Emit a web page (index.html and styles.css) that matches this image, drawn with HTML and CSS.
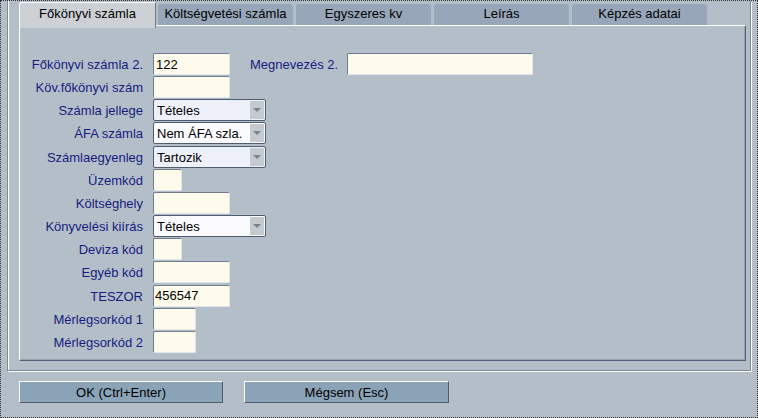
FILE: index.html
```html
<!DOCTYPE html>
<html lang="hu">
<head>
    <meta charset="UTF-8">
    <title>Főkönyvi számla</title>
    <link rel="stylesheet" href="styles.css">
</head>
<body>
    <div class="window">
        <!-- keretes csoport: fülek + panel -->
        <div class="group">
            <div class="tabs">
                <div class="tab active">Főkönyvi számla</div>
                <div class="tab">Költségvetési számla</div>
                <div class="tab">Egyszeres kv</div>
                <div class="tab">Leírás</div>
                <div class="tab">Képzés adatai</div>
            </div>
            <div class="panel">
                <div class="form">
                    <label>Főkönyvi számla 2.</label>
                    <div class="cell">
                        <input class="field w77" type="text" value="122">
                        <span class="side-label">Megnevezés 2.</span>
                        <input class="field w186" type="text" value="">
                    </div>

                    <label>Köv.főkönyvi szám</label>
                    <div class="cell"><input class="field w77" type="text" value=""></div>

                    <label>Számla jellege</label>
                    <div class="cell"><div class="select"><span class="val">Tételes</span><span class="arrow"></span></div></div>

                    <label>ÁFA számla</label>
                    <div class="cell"><div class="select white"><span class="val">Nem ÁFA szla.</span><span class="arrow"></span></div></div>

                    <label>Számlaegyenleg</label>
                    <div class="cell"><div class="select"><span class="val">Tartozik</span><span class="arrow"></span></div></div>

                    <label>Üzemkód</label>
                    <div class="cell"><input class="field w29" type="text" value=""></div>

                    <label>Költséghely</label>
                    <div class="cell"><input class="field w77" type="text" value=""></div>

                    <label>Könyvelési kiírás</label>
                    <div class="cell"><div class="select white"><span class="val">Tételes</span><span class="arrow"></span></div></div>

                    <label>Deviza kód</label>
                    <div class="cell"><input class="field w29" type="text" value=""></div>

                    <label>Egyéb kód</label>
                    <div class="cell"><input class="field w77" type="text" value=""></div>

                    <label>TESZOR</label>
                    <div class="cell"><input class="field w77 tight" type="text" value="456547"></div>

                    <label>Mérlegsorkód 1</label>
                    <div class="cell"><input class="field w43" type="text" value=""></div>

                    <label>Mérlegsorkód 2</label>
                    <div class="cell"><input class="field w43" type="text" value=""></div>
                </div>
            </div>
        </div>

        <div class="buttons">
            <button class="btn">OK (Ctrl+Enter)</button>
            <button class="btn wide">Mégsem (Esc)</button>
        </div>
    </div>
</body>
</html>
```

FILE: styles.css
```css
/* ablak alap */
body {
    margin: 0;
}
.window {
    width: 758px;
    height: 418px;
    box-sizing: border-box;
    border: 1px dotted #2e2e2e;
    background-color: #b4bec8;
    font-family: "Liberation Sans", Arial, sans-serif;
    font-size: 13px;
    color: #000;
}

/* bemélyített keret (szürke + fehér vonal) */
.group {
    margin-left: 6px;
    width: 744px;
    height: 370px;
    box-sizing: border-box;
    border: 1px solid #7e8894;
    border-top: none;
    box-shadow: 1px 1px 0 #fff, inset 1px 0 0 #fff;
    padding: 1px 0 0 11px;
}

/* fülek */
.tabs {
    display: flex;
    align-items: flex-end;
    height: 23px;
    position: relative;
    z-index: 1;
}
.tab {
    width: 135px;
    height: 21px;
    margin-right: 3px;
    box-sizing: border-box;
    background-color: #97a6b9;
    border-radius: 3px 3px 0 0;
    text-align: center;
    line-height: 20px;
    white-space: nowrap;
}
.tab.active {
    width: 137px;
    height: 26px;
    margin-right: 2px;
    margin-bottom: -3px;
    background-color: #cdd1d5;
    border-left: 1px solid #fff;
    border-top: 1px solid #fff;
    border-right: 1px solid #6c7a8a;
    border-radius: 3px 2px 0 0;
    line-height: 21px;
    align-self: flex-start;
}

/* panel a fülek alatt */
.panel {
    width: 727px;
    height: 336px;
    box-sizing: border-box;
    border: 1px solid;
    border-color: #fff #56627a #56627a #fff;
    box-shadow: inset -1px -1px 0 #98a2ae;
    padding-top: 27px;
}

.form {
    display: grid;
    grid-template-columns: 123px 1fr;
    grid-auto-rows: 22px;
    column-gap: 10px;
    row-gap: 1.17px;
}
.form label {
    text-align: right;
    line-height: 23px;
    color: #141c80;
    white-space: nowrap;
}
.cell {
    display: flex;
    align-items: center;
}
.side-label {
    width: 97px;
    margin-left: 20px;
    color: #141c80;
    white-space: nowrap;
}

/* beviteli mezők */
.field {
    height: 22px;
    box-sizing: border-box;
    margin: 0;
    padding: 0 2px;
    border: 1px solid;
    border-color: #6e7c8e #e2e5e9 #e2e5e9 #6e7c8e;
    border-radius: 2px;
    background-color: #fffbec;
    font-family: "Liberation Sans", Arial, sans-serif;
    font-size: 13px;
    color: #000;
    outline: none;
}
.field.tight {
    padding: 0 1px;
}
.w29 { width: 29px; }
.w43 { width: 43px; }
.w77 { width: 77px; }
.w186 { width: 186px; }

/* legördülő */
.select {
    width: 113px;
    height: 22px;
    box-sizing: border-box;
    border: 1px solid #4e5c72;
    border-radius: 2px;
    background-color: #eef1fa;
    display: flex;
}
.select.white {
    background-color: #fbfbfd;
}
.select .val {
    flex: 1;
    padding-left: 3px;
    line-height: 21px;
    white-space: nowrap;
    overflow: hidden;
}
.select .arrow {
    width: 14px;
    margin: 1px 1px 1px 0;
    background-color: #c5cacf;
    display: flex;
    align-items: center;
    justify-content: center;
}
.select .arrow::after {
    content: '';
    border-left: 4px solid transparent;
    border-right: 4px solid transparent;
    border-top: 4px solid #7a828c;
}

/* gombok */
.buttons {
    display: flex;
    margin: 10px 0 0 18px;
}
.btn {
    width: 204px;
    height: 22px;
    margin: 0 21px 0 0;
    padding: 0;
    box-sizing: border-box;
    border: 1px solid;
    border-color: #fff #4e5c6c #4e5c6c #fff;
    background-color: #8ba3b7;
    font-family: "Liberation Sans", Arial, sans-serif;
    font-size: 13px;
    color: #000;
}
.btn.wide {
    width: 205px;
}
```
